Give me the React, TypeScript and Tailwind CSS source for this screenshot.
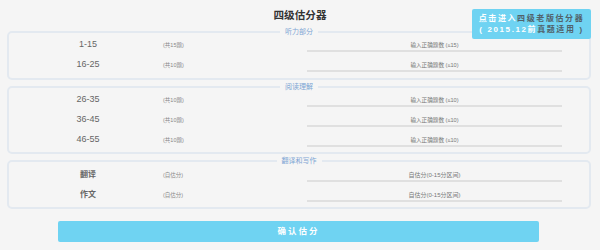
import React from 'react';

type Row = { label: string; note: string; hint: string };

const sections: { title: string; rows: Row[]; cls: string; label: string; hint: string }[] = [
    {
        title: '听力部分',
        cls: 'pb-[3px]',
        label: 'text-[9px]',
        hint: 'text-[5.6px]',
        rows: [
            { label: '1-15', note: '(共15题)', hint: '输入正确题数 (≤15)' },
            { label: '16-25', note: '(共10题)', hint: '输入正确题数 (≤10)' },
        ],
    },
    {
        title: '阅读理解',
        cls: 'mt-[4px] pb-[2px]',
        label: 'text-[9px]',
        hint: 'text-[5.6px]',
        rows: [
            { label: '26-35', note: '(共10题)', hint: '输入正确题数 (≤10)' },
            { label: '36-45', note: '(共10题)', hint: '输入正确题数 (≤10)' },
            { label: '46-55', note: '(共10题)', hint: '输入正确题数 (≤10)' },
        ],
    },
    {
        title: '翻译和写作',
        cls: 'mt-[4px] pt-[1px] pb-[2px]',
        label: 'text-[8px] font-semibold',
        hint: 'text-[6px]',
        rows: [
            { label: '翻译', note: '(自估分)', hint: '自估分(0-15分区间)' },
            { label: '作文', note: '(自估分)', hint: '自估分(0-15分区间)' },
        ],
    },
];

const font = { fontFamily: '"Liberation Sans", "Noto Sans CJK SC", sans-serif' };

const App: React.FC = () => {
    return (
        <div className="relative w-[600px] h-[250px] overflow-hidden bg-[#f5f5f5] pt-[7px]" style={font}>
            {/* 标题 */}
            <h1 className="text-center text-[10.6px] leading-[16px] font-bold text-[#333] mb-[6px]">四级估分器</h1>

            {/* 老版入口 */}
            <a className="absolute top-[9px] right-[9px] w-[119px] h-[30px] flex flex-col items-center justify-center bg-[#6fd3f2] rounded-[2px] text-[8px] leading-[11px] font-bold tracking-[1.6px] text-white cursor-pointer">
                <span>
                    点击进入<span className="text-[#52626a]">四级老版估分器</span>
                </span>
                <span>
                    ( 2015.12前<span className="text-[#52626a]">真题适用 )</span>
                </span>
            </a>

            {sections.map((sec) => (
                <fieldset
                    key={sec.title}
                    className={`ml-[7px] mr-[9px] border-2 border-[#e3e9f0] rounded-[5px] ${sec.cls}`}
                >
                    <legend className="mx-auto px-[5px] text-[7px] leading-[6px] text-[#7fa6d4]">{sec.title}</legend>
                    {sec.rows.map((r) => (
                        <div key={r.label} className="flex items-center h-[20px]">
                            <div className={`ml-[4px] w-[150px] text-center text-[#666] ${sec.label}`}>{r.label}</div>
                            <div className="w-[144px] text-[5.5px] text-[#888]">{r.note}</div>
                            <input
                                className={`w-[255px] h-[13px] mt-[1px] bg-transparent border-b-2 border-[#e0e0e0] text-center outline-none placeholder:text-[#777] ${sec.hint}`}
                                placeholder={r.hint}
                            />
                        </div>
                    ))}
                </fieldset>
            ))}

            <button className="mt-[12px] ml-[58px] w-[481px] h-[21px] bg-[#6fd3f2] rounded-[2px] text-white text-[8.5px] font-bold tracking-[2px]">
                确认估分
            </button>
        </div>
    );
};

export default App;
